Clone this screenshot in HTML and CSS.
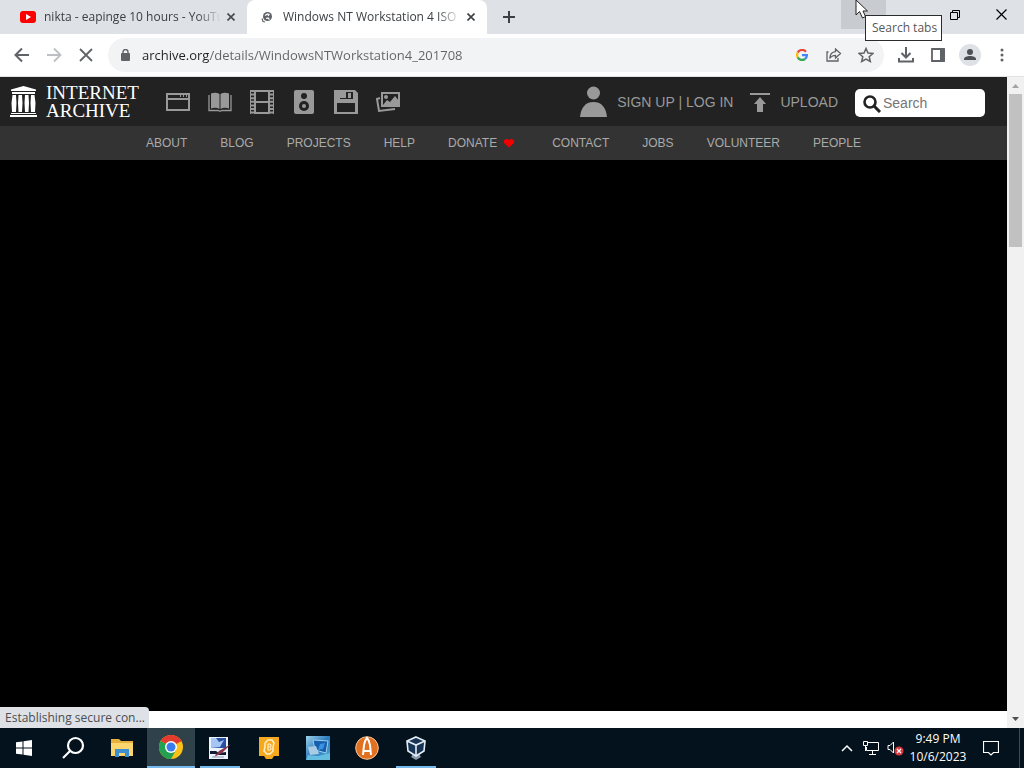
FILE: index.html
```html
<!DOCTYPE html>
<html lang="en">
<head>
<meta charset="utf-8">
<meta name="viewport" content="width=device-width, initial-scale=1">
<title>Windows NT Workstation 4 ISO</title>
<link rel="stylesheet" href="styles.css">
</head>
<body>
<div class="tabstrip">
  <div class="tab">
    <svg class="tab-icon" viewBox="0 0 16 16"><rect y="2" width="16" height="12" rx="3" fill="#f00"/><path d="M6 5v6l5-3z" fill="#fff"/></svg>
    <span class="tab-title">nikta - eapinge 10 hours - YouTu</span>
    <button class="tab-close" aria-label="Close tab"><svg width="8" height="8" viewBox="0 0 8 8"><path d="M.5.5l7 7M7.500.5l-7 7" stroke="#45494d" stroke-width="1.600"/></svg></button>
  </div>
  <div class="tab tab-active">
    <svg class="tab-icon" viewBox="0 0 16 16"><circle cx="8.500" cy="7.500" r="4.500" fill="#5f6368"/><path d="M6 6.500l2.500-1.500 1.500.5-1 1.500M7 9.500l2-.5 1.500 1.500" fill="none" stroke="#fff" stroke-width="1.200"/><path d="M3 9.500l1 3 2 .5" fill="none" stroke="#5f6368" stroke-width="1.200"/></svg>
    <span class="tab-title">Windows NT Workstation 4 ISO</span>
    <button class="tab-close" aria-label="Close tab"><svg width="8" height="8" viewBox="0 0 8 8"><path d="M.5.5l7 7M7.500.5l-7 7" stroke="#3c4043" stroke-width="1.600"/></svg></button>
  </div>
  <button class="new-tab" aria-label="New tab"><svg width="12" height="12" viewBox="0 0 12 12"><path d="M6 0v12M0 6h12" stroke="#3c4043" stroke-width="2"/></svg></button>
  <div class="window-controls">
    <div class="tab-search">
      <button class="tab-search-button" aria-label="Search tabs"></button>
      <svg class="pointer" width="14" height="20" viewBox="0 0 14 20"><path d="M1 0v15l3.500-3.500L7.500 18l3-1.500L8 11h4.500z" fill="#fff" stroke="#222" stroke-width="1"/></svg>
      <span class="tooltip">Search tabs</span>
    </div>
    <button class="window-button" aria-label="Minimize"><svg width="10" height="10" viewBox="0 0 10 10"><path d="M0 5.500h10" stroke="#000"/></svg></button>
    <button class="window-button" aria-label="Restore"><svg width="10" height="10" viewBox="0 0 10 10" fill="none" stroke="#000"><path d="M.5 2.500h7v7h-7zM2.500 2.500v-2h7v7h-2"/></svg></button>
    <button class="window-button" aria-label="Close"><svg width="11" height="11" viewBox="0 0 11 11"><path d="M.5.5l10 10M10.500.5l-10 10" stroke="#000" stroke-width="1.200"/></svg></button>
  </div>
</div>

<div class="toolbar">
  <button class="tool" aria-label="Back"><svg width="16" height="16" viewBox="0 0 16 16"><path d="M15 8H2M8 1.500L1.500 8 8 14.500" fill="none" stroke="#5f6368" stroke-width="2"/></svg></button>
  <button class="tool" aria-label="Forward"><svg width="16" height="16" viewBox="0 0 16 16"><path d="M1 8h13M8 1.500L14.500 8 8 14.500" fill="none" stroke="#bdbfc3" stroke-width="1.800"/></svg></button>
  <button class="tool" aria-label="Stop"><svg width="14" height="14" viewBox="0 0 14 14"><path d="M1 1l12 12M13 1L1 13" stroke="#5f6368" stroke-width="1.800"/></svg></button>
  <div class="omnibox">
    <svg class="lock" width="10" height="12" viewBox="0 0 10 12"><rect x="1" y="4" width="9" height="8" rx="1" fill="#5f6368"/><path d="M3 5V3a2.500 2.500 0 0 1 5 0v2" fill="none" stroke="#5f6368" stroke-width="1.400"/></svg>
    <input class="url" type="text" aria-label="Address" value="archive.org/details/WindowsNTWorkstation4_201708">
    <button class="tool" aria-label="Google"><svg width="12" height="12" viewBox="0 0 12 12" fill="none" stroke-width="2.200"><path d="M10 2.800A5 5 0 0 0 1.700 3.600" stroke="#ea4335"/><path d="M1.700 3.600a5 5 0 0 0 0 4.800" stroke="#fbbc05"/><path d="M1.700 8.400A5 5 0 0 0 9 10" stroke="#34a853"/><path d="M9 10a4.500 4.500 0 0 0 1.900-3.800H6" stroke="#4285f4"/></svg></button>
    <button class="tool" aria-label="Share"><svg width="16" height="14" viewBox="0 0 16 14" fill="none" stroke="#5f6368" stroke-width="1.300"><path d="M2.500 4H1v9h11v-3"/><path d="M9.500 1l5 4.500-5 4.500V7.300C7 7.300 5 8.300 3.700 10.500 4 6.500 6 4 9.500 3.700z"/></svg></button>
    <button class="tool" aria-label="Bookmark"><svg width="16" height="16" viewBox="0 0 16 16"><path d="M8 1.500l2 4.500 4.900.5-3.700 3.200 1.100 4.800L8 12l-4.300 2.500 1.100-4.800L1.100 6.500 6 6z" fill="none" stroke="#5f6368" stroke-width="1.500"/></svg></button>
  </div>
  <button class="tool" aria-label="Downloads"><svg width="16" height="16" viewBox="0 0 16 16" fill="none" stroke="#5f6368" stroke-width="2"><path d="M8 0v10M3.500 6L8 10.500 12.500 6M1 11v3.500h14V11"/></svg></button>
  <button class="tool" aria-label="Side panel"><svg width="14" height="14" viewBox="0 0 14 14"><path d="M1 1h12v12H1z" fill="none" stroke="#5f6368" stroke-width="1.800"/><path d="M9 1h5v12H9z" fill="#5f6368"/></svg></button>
  <button class="tool" aria-label="Profile"><svg width="22" height="22" viewBox="0 0 22 22"><circle cx="11" cy="11" r="11" fill="#dee1e6"/><circle cx="11" cy="8" r="3" fill="#4d5156"/><path d="M5 16v-1c0-4 12-4 12 0v1z" fill="#4d5156"/></svg></button>
  <button class="tool" aria-label="Menu"><svg width="4" height="14" viewBox="0 0 4 14" fill="#5f6368"><circle cx="2" cy="2" r="1.500"/><circle cx="2" cy="7" r="1.500"/><circle cx="2" cy="12" r="1.500"/></svg></button>
</div>

<div class="viewport">
  <main class="page">
    <header class="topnav">
      <a class="logo" href="#">
        <svg width="27" height="31" viewBox="0 0 27 31" fill="#fff"><path d="M13.500 0L26 3.500V5H1V3.500zM2 6h23v2H2zM2.500 9h3.500l.5 8-.5 9H2l-.5-9zM8.500 9H12l.5 8-.5 9H8.500L8 17zM15 9h3.500l.5 8-.5 9H15l-.5-9zM21 9h3.500l1 8-.5 9h-4l-.5-9zM1 27h25v1H1zM0 29h27v2H0z"/></svg>
        <span class="logo-text">INTERNET<br>ARCHIVE</span>
      </a>
      <nav class="media">
        <a href="#" aria-label="Web"><svg viewBox="0 0 26 26"><path d="M2 5h22v16H2zM2 10h22" fill="none" stroke="#999" stroke-width="2"/><path d="M15 5h1v3h-1zM18 5h1v3h-1zM21 5h1v3h-1z" fill="#999"/></svg></a>
        <a href="#" aria-label="Texts"><svg viewBox="0 0 26 26"><path d="M4 4.500c3-1 6-1 8.500.5v15c-2.500-1.500-5.500-1.500-8.500-.5zM13.500 5c2.500-1.500 5.500-1.500 8.500-.5v15c-3-1-6-1-8.500.5z" fill="#999"/><path d="M2 6v15.500h9l2 .8 2-.8h9V6" fill="none" stroke="#999" stroke-width="1.300"/></svg></a>
        <a href="#" aria-label="Video"><svg viewBox="0 0 26 26"><path d="M6 2h14v22H6zM6 13h14" fill="none" stroke="#999" stroke-width="2"/><path d="M3.500 1v24M22.500 1v24" stroke="#999" stroke-width="3" stroke-dasharray="2 1.600"/><path d="M1.500 1v24M24.500 1v24" stroke="#999"/></svg></a>
        <a href="#" aria-label="Audio"><svg viewBox="0 0 26 26"><rect x="3" y="1" width="20" height="24" rx="2" fill="#999"/><circle cx="13" cy="7" r="3" fill="#222"/><circle cx="13" cy="17" r="5" fill="#222"/><circle cx="13" cy="17" r="2" fill="#999"/></svg></a>
        <a href="#" aria-label="Software"><svg viewBox="0 0 26 26"><path d="M1 1h21l3 3v21H1z" fill="#999"/><path d="M7 3h13v7H7zM4 14h18v9H4z" fill="#222"/><path d="M7 3h6v6H7z" fill="#999"/><path d="M15 4h3v5h-3z" fill="#999"/></svg></a>
        <a href="#" aria-label="Images"><svg viewBox="0 0 26 26"><path d="M7 4h17v13H7z" fill="none" stroke="#999" stroke-width="2"/><path d="M5 9l-3 1 2 12 16-2" fill="none" stroke="#999" stroke-width="2"/><path d="M8 16l4-5 3 2 5-6 4 5v5H8z" fill="#999"/><circle cx="11" cy="8" r="2" fill="#999"/></svg></a>
      </nav>
      <div class="account">
        <a class="signin" href="#"><svg width="27" height="31" viewBox="0 0 27 31" fill="#999"><circle cx="13.500" cy="7" r="6.500"/><path d="M0 31C1 22 5 16 13.500 16S26 22 27 31z"/></svg>SIGN UP | LOG IN</a>
        <a class="upload" href="#"><svg width="20" height="20" viewBox="0 0 20 20" fill="#999"><path d="M0 1h20v2H0zM10 5l6 7h-3v8H7v-8H4z"/></svg>UPLOAD</a>
        <label class="search"><svg width="20" height="20" viewBox="0 0 20 20" fill="none" stroke="#222"><circle cx="8" cy="9" r="5.500" stroke-width="2.600"/><path d="M12 13l6 6" stroke-width="3"/></svg><input type="text" placeholder="Search" aria-label="Search"></label>
      </div>
    </header>
    <nav class="subnav">
      <a href="#">ABOUT</a>
      <a href="#">BLOG</a>
      <a href="#">PROJECTS</a>
      <a href="#">HELP</a>
      <a class="donate" href="#">DONATE<svg width="12" height="10" viewBox="0 0 12 10"><path d="M6 9.500L1 5C0 1 4 0 6 2c2-2 6-1 5 3z" fill="#f00000"/></svg></a>
      <a href="#">CONTACT</a>
      <a href="#">JOBS</a>
      <a href="#">VOLUNTEER</a>
      <a href="#">PEOPLE</a>
    </nav>
    <div class="stage"></div>
  </main>
  <div class="scrollbar">
    <svg width="17" height="17" viewBox="0 0 17 17"><path d="M5 11l3.500-4 3.500 4z" fill="#a3a3a3"/></svg>
    <div class="thumb"></div>
    <svg width="17" height="17" viewBox="0 0 17 17"><path d="M5 6l3.500 4L12 6z" fill="#505050"/></svg>
  </div>
  <div class="status">Establishing secure con...</div>
</div>

<footer class="taskbar">
  <button class="task" aria-label="Start"><svg width="16" height="16" viewBox="0 0 16 16" fill="#fff"><path d="M0 2.300L6.500 1.400v6.100H0zM7.500 1.200L16 0v7.500H7.500zM0 8.500h6.500v6.100L0 13.700zM7.500 8.500H16V16l-8.500-1.200z"/></svg></button>
  <button class="task" aria-label="Search"><svg width="24" height="24" viewBox="0 0 24 24" fill="none" stroke="#fff" stroke-width="2.200"><circle cx="14.500" cy="9.500" r="7.500"/><path d="M9 15l-7 7"/></svg></button>
  <button class="task" aria-label="File Explorer"><svg width="22" height="20" viewBox="0 0 22 20"><path d="M0 1h8l2 2h12v15H0z" fill="#e5b03c"/><path d="M0 5h22v13H0z" fill="#fbd56d"/><path d="M4 19v-8h14v8h-4v-4H8v4z" fill="#3f8fd0"/></svg></button>
  <button class="task task-open" aria-label="Chrome"><svg width="24" height="24" viewBox="0 0 24 24"><circle cx="12" cy="12" r="12" fill="#fbc116"/><path d="M12 12L1.600 6A12 12 0 0 1 22.400 6z" fill="#e33b2e"/><path d="M12 12L1.600 6A12 12 0 0 0 12 24l5-9z" fill="#23a150"/><path d="M12 6h10.400" stroke="#e33b2e" stroke-width="1"/><circle cx="12" cy="12" r="6" fill="#fff"/><circle cx="12" cy="12" r="4.500" fill="#3b7ded"/></svg></button>
  <button class="task task-running" aria-label="Drawing program"><svg width="22" height="24" viewBox="0 0 22 24"><path d="M0 1h19v22H0z" fill="#eef2fa"/><path d="M2 2h15v10H2z" fill="#2650a5"/><path d="M2 2h5l3 4 5-2-4 7-9 1z" fill="#a5c5f2"/><path d="M1 15h6l3 2 7-1v3H8l-2-1H1z" fill="#101c34"/><path d="M22 8l-9 9-8 4 5-6z" fill="#8a344b"/><path d="M3 21h12" stroke="#8b96ad"/></svg></button>
  <button class="task" aria-label="Game"><svg width="22" height="24" viewBox="0 0 22 24"><path d="M1 1h20v19h-5l-2 3H8l-2-3H1z" fill="#f6a81f"/><path d="M10 4h4l2 3-1 4v4l-3 3H9l-3-3 1-4V7z" fill="none" stroke="#fff0c9" stroke-width="1.500"/><path d="M10 14V8h1.500a1.500 1.500 0 0 1 0 3H10h1.500a1.500 1.500 0 0 1 0 3z" fill="none" stroke="#fff0c9" stroke-width="1.200"/></svg></button>
  <button class="task" aria-label="Remote display"><svg width="24" height="24" viewBox="0 0 24 24"><defs><linearGradient id="sky" x1="0" y1="0" x2="1" y2="1"><stop offset="0" stop-color="#9fd2ea"/><stop offset=".5" stop-color="#2b7dbd"/><stop offset="1" stop-color="#4ea6d6"/></linearGradient></defs><path d="M0 0h24v24H0z" fill="url(#sky)"/><path d="M0 24l2-5 10 1 12-3v7z" fill="#65bde0"/><path d="M7 4l15 1-2 12-11-3z" fill="#155fae" stroke="#9fd0ec"/><path d="M14 8l5-1-2 6-5 1z" fill="#3b93e0"/><path d="M2 11l8-1 3 8-9 1z" fill="#a9cce4"/></svg></button>
  <button class="task" aria-label="Launcher"><svg width="24" height="24" viewBox="0 0 24 24"><circle cx="12" cy="12" r="11.300" fill="#e17120" stroke="#f5c79d"/><path d="M8 19l1-10c.5-4 2-6 3-7 1 1 2.500 3 3 7l1 10M8.500 15h7" fill="none" stroke="#fff" stroke-width="2"/></svg></button>
  <button class="task task-running" aria-label="VirtualBox"><svg width="22" height="24" viewBox="0 0 22 24"><path d="M8 18h6l2 3-5 3-5-3z" fill="#8998ac"/><path d="M11 1l9 4-1 10-8 5-8-5L2 5z" fill="#173454" stroke="#e4edf6" stroke-width="1.600"/><path d="M2 5l9 4 9-4M11 9v11" fill="none" stroke="#e4edf6" stroke-width="1.600"/></svg></button>
  <div class="tray">
    <button class="tray-button" aria-label="Show hidden icons"><svg width="12" height="8" viewBox="0 0 12 8"><path d="M1 7l5-5 5 5" fill="none" stroke="#fff" stroke-width="1.500"/></svg></button>
    <button class="tray-button" aria-label="Network"><svg width="16" height="14" viewBox="0 0 16 14" fill="none" stroke="#fff"><path d="M5 1.500h10.500v8H3.500V6M6 13.500h7M9.500 10v3"/><path d="M.5.500h4v4h-4zM2.500 5v5"/></svg></button>
    <button class="tray-button" aria-label="Volume muted"><svg width="17" height="16" viewBox="0 0 17 16"><path d="M1 5.500h2L6.500 2v11L3 9.500H1z" fill="none" stroke="#fff"/><circle cx="12" cy="11" r="4.500" fill="#d9383c"/><path d="M10 9l4 4M14 9l-4 4" stroke="#fff" stroke-width="1.200"/></svg></button>
    <div class="clock">9:49 PM<br>10/6/2023</div>
    <button class="tray-note" aria-label="Notifications"><svg width="16" height="16" viewBox="0 0 16 16"><path d="M.5 1.500h15v11h-5L8 15l-2.500-2.500h-5z" fill="none" stroke="#fff" stroke-width="1.200"/></svg></button>
    <div class="peek"></div>
  </div>
</footer>
</body>
</html>
```
FILE: styles.css
```css
* { box-sizing: border-box; }
body {
  margin: 0;
  height: 100vh;
  display: flex;
  flex-direction: column;
  overflow: hidden;
  font: 12px/16px "Open Sans", "Noto Sans", sans-serif;
  color: #3c4043;
}
button {
  display: flex;
  align-items: center;
  justify-content: center;
  flex: none;
  border: 0;
  padding: 0;
  background: none;
}
a { color: inherit; text-decoration: none; }
svg { display: block; flex: none; }
input { border: 0; padding: 0; outline: 0; background: none; min-width: 0; }

.tabstrip { display: flex; height: 34px; flex: none; background: #dee1e6; }
.tab {
  display: flex;
  align-items: center;
  flex: 0 1 240px;
  min-width: 0;
  padding: 0 8px 0 12px;
}
.tab:first-child { flex-basis: 247px; padding-left: 20px; }
.tab-active { background: #fff; border-radius: 8px 8px 0 0; }
.tab-icon { width: 16px; height: 16px; margin-right: 8px; }
.tab-title {
  flex: 1;
  overflow: hidden;
  white-space: nowrap;
  mask-image: linear-gradient(to left, transparent, #000 24px);
}
.tab-close { width: 16px; height: 16px; margin-left: 2px; }
.new-tab { width: 28px; height: 34px; margin-left: 8px; }
.window-controls { display: flex; height: 29px; margin-left: auto; }
.window-button { width: 46px; height: 29px; }
.tab-search { position: relative; }
.tab-search-button { width: 45px; height: 29px; background: #c8cbd0; }
.pointer { position: absolute; left: 14px; top: 0; z-index: 3; }
.tooltip {
  position: absolute;
  left: 24px;
  top: 15px;
  z-index: 2;
  padding: 4px 4px 4px 6px;
  border: 1px solid #2b2b2b;
  background: #fff;
  color: #575757;
  white-space: nowrap;
}

.toolbar {
  display: flex;
  align-items: center;
  height: 43px;
  flex: none;
  padding: 0 6px;
  background: #fff;
  border-bottom: 1px solid #dfe3e3;
}
.tool { width: 32px; height: 32px; }
.omnibox {
  display: flex;
  align-items: center;
  flex: 1;
  min-width: 0;
  height: 34px;
  margin: 0 6px;
  padding: 0 2px 0 12px;
  border-radius: 17px;
  background: #f1f3f4;
}
.lock { margin-right: 12px; }
.url {
  flex: 1;
  font: 13px/20px "Open Sans", "Noto Sans", sans-serif;
  color: transparent;
  background: linear-gradient(to right, #202124 68px, #5f6368 68px);
  background-clip: text;
  -webkit-background-clip: text;
}

.viewport { position: relative; display: flex; flex: 1; min-height: 0; }
.page { display: flex; flex-direction: column; flex: 1; min-width: 0; padding-bottom: 17px; background: #fff; }
.topnav {
  display: flex;
  align-items: center;
  height: 49px;
  flex: none;
  padding: 0 22px 0 10px;
  background: #222;
  color: #999;
  font: 14px/20px "Liberation Sans", Arial, sans-serif;
}
.logo { display: flex; align-items: center; gap: 9px; color: #fff; }
.logo-text { font: 19px/18px "Liberation Serif", "Times New Roman", serif; }
.media { display: flex; gap: 16px; margin-left: 26px; }
.media svg { width: 26px; height: 26px; }
.account { display: flex; align-items: center; margin-left: auto; }
.signin, .upload { display: flex; align-items: center; gap: 10px; margin-right: 17px; white-space: nowrap; }
.search {
  display: flex;
  align-items: center;
  width: 130px;
  height: 28px;
  margin-top: 3px;
  padding-left: 7px;
  border-radius: 5px;
  background: #fff;
}
.search input { flex: 1; margin-left: 1px; font: 14px/20px "Liberation Sans", Arial, sans-serif; color: #333; }
.search input::placeholder { color: #757575; }
.subnav {
  display: flex;
  align-items: center;
  justify-content: center;
  gap: 33px;
  height: 34px;
  flex: none;
  background: #333;
  color: #aaa;
  font: 12px/16px "Liberation Sans", Arial, sans-serif;
}
.donate { display: flex; align-items: center; gap: 6px; padding-right: 4px; }
.stage { flex: 1; background: #000; }

.scrollbar { display: flex; flex-direction: column; width: 17px; flex: none; background: #f1f1f1; }
.thumb { height: 153px; margin: 0 2px auto; background: #c1c1c1; }
.status {
  position: absolute;
  left: 0;
  bottom: 0;
  padding: 3px 4px 2px 5px;
  border-radius: 0 4px 0 0;
  background: #dee1e6;
  color: #4a4e52;
  white-space: nowrap;
}

.taskbar { display: flex; gap: 1px; height: 40px; flex: none; background: #03121c; color: #fff; }
.task { width: 48px; height: 40px; }
.task-open { background: #2f424a; border-bottom: 2px solid #76b9ed; }
.task-running { background: linear-gradient(#76b9ed, #76b9ed) center bottom / 40px 2px no-repeat; }
.tray { display: flex; align-items: center; margin-left: auto; }
.tray-button { width: 24px; height: 40px; }
.clock { width: 62px; line-height: 18px; text-align: center; }
.tray-note { width: 44px; height: 40px; margin-right: 6px; }
.peek { width: 5px; height: 40px; border-left: 1px solid #3c4a5c; }
```
